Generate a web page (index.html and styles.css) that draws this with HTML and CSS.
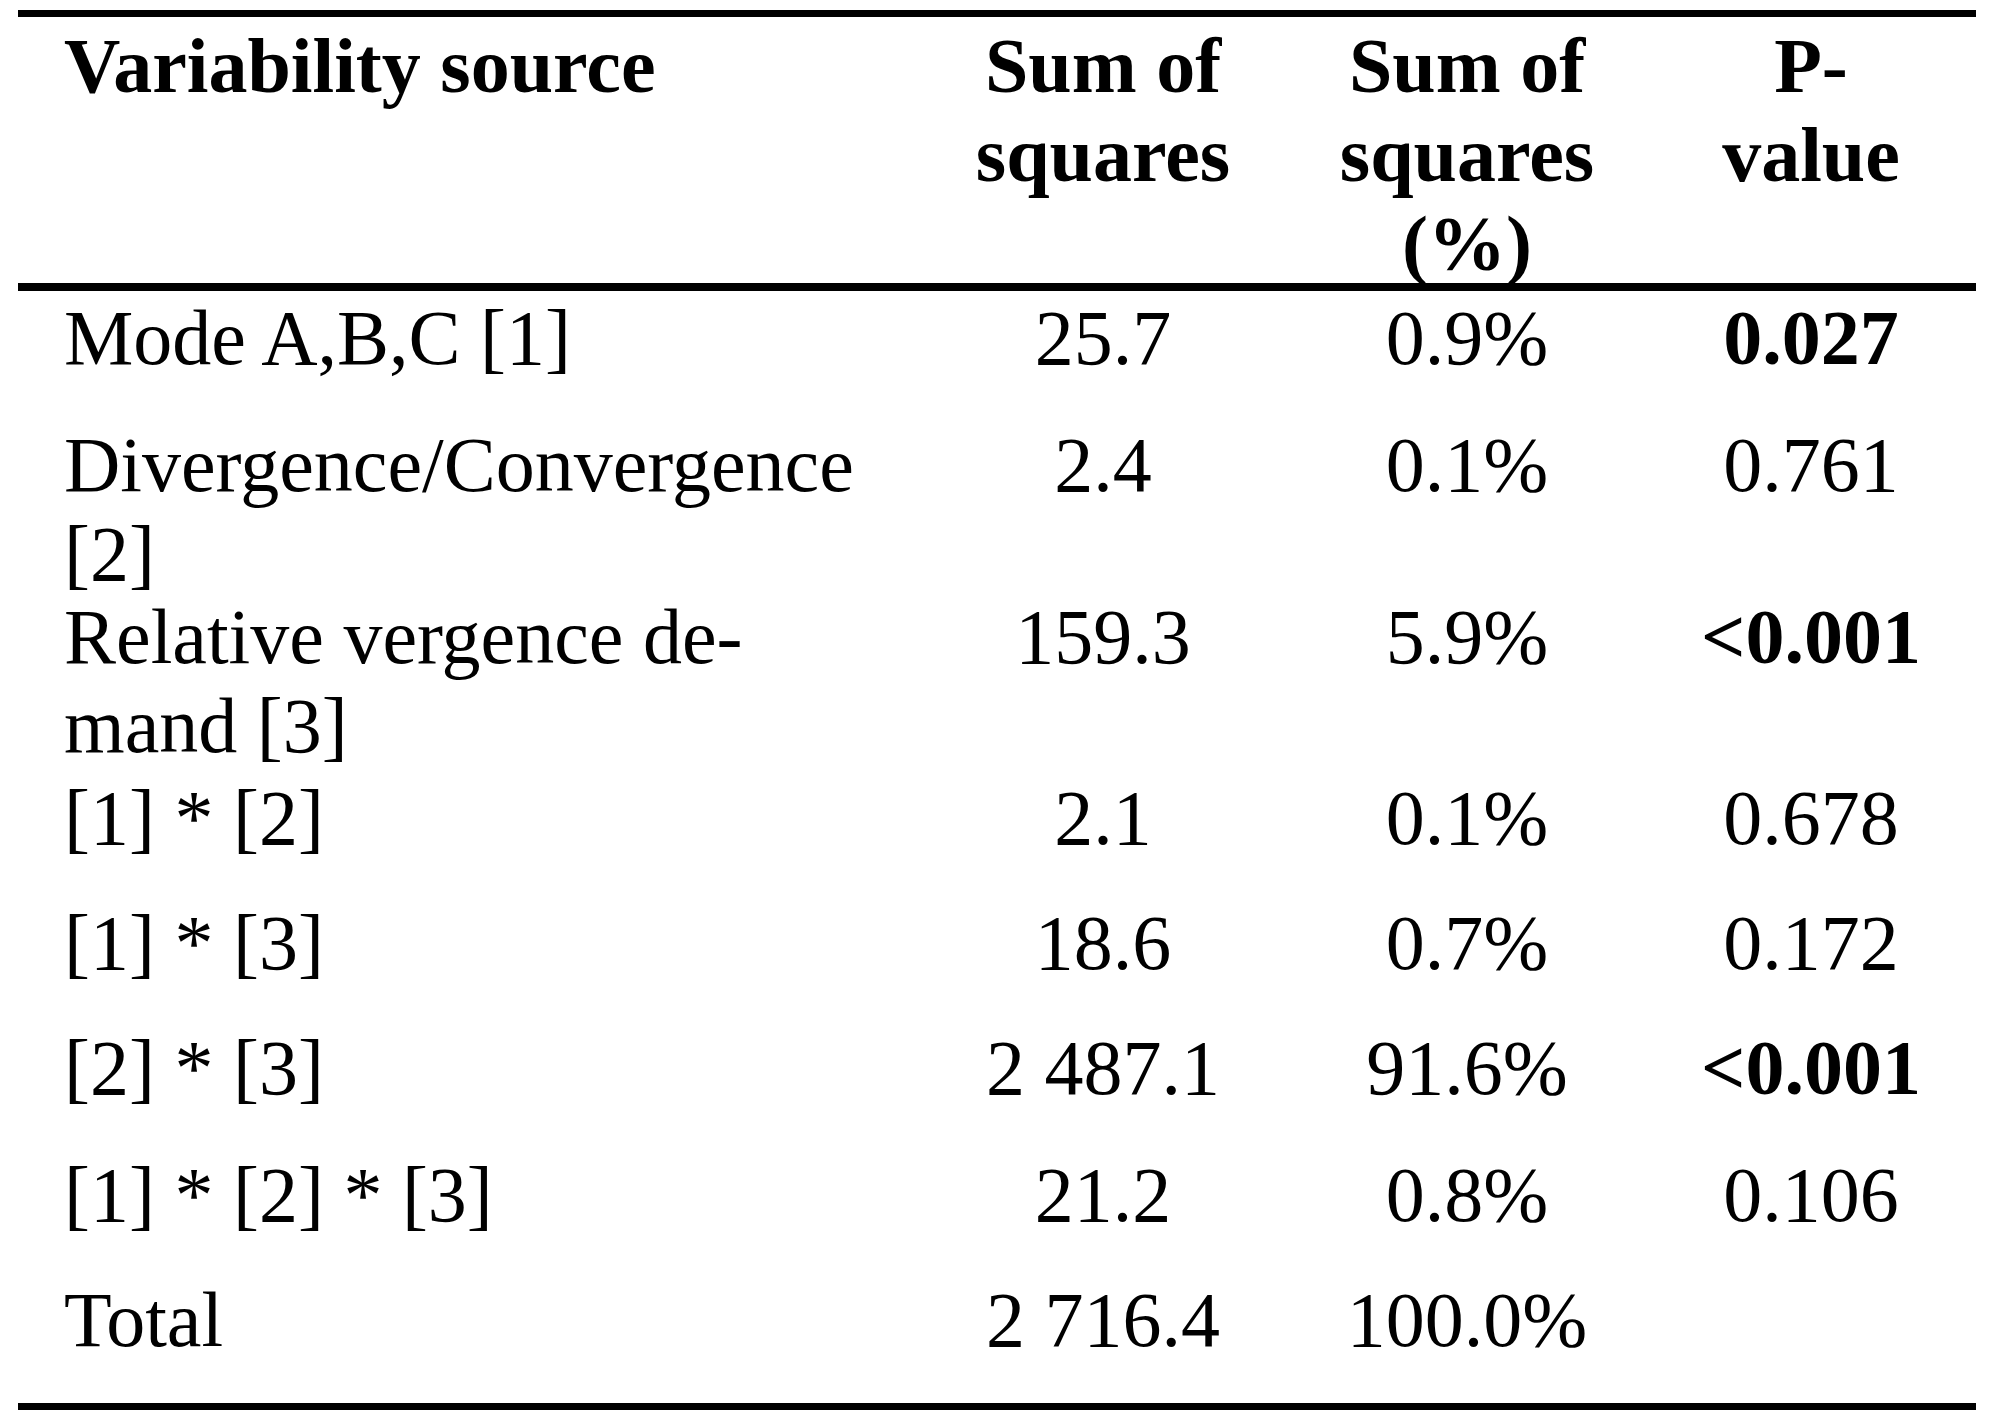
FILE: index.html
```html
<!DOCTYPE html>
<html lang="en">
<head>
<meta charset="utf-8">
<title>ANOVA table</title>
<link rel="stylesheet" href="styles.css">
</head>
<body>
<table class="anova">
  <colgroup>
    <col class="c-src">
    <col class="c-ss">
    <col class="c-pct">
    <col class="c-p">
  </colgroup>
  <thead>
    <tr>
      <th class="src"><div class="hd">Variability source</div></th>
      <th><div class="hd">Sum of<br>squares</div></th>
      <th><div class="hd">Sum of<br>squares<br>(%)</div></th>
      <th><div class="hd">P-<br>value</div></th>
    </tr>
  </thead>
  <tbody>
    <tr class="r-a">
      <td class="src">Mode A,B,C [1]</td>
      <td>25.7</td>
      <td>0.9%</td>
      <td class="sig">0.027</td>
    </tr>
    <tr class="r-b">
      <td class="src"><div class="squeeze">Divergence/Convergence<br>[2]</div></td>
      <td>2.4</td>
      <td>0.1%</td>
      <td>0.761</td>
    </tr>
    <tr class="r-c">
      <td class="src">Relative vergence de-<br>mand [3]</td>
      <td>159.3</td>
      <td>5.9%</td>
      <td class="sig">&lt;0.001</td>
    </tr>
    <tr class="r-d">
      <td class="src">[1] * [2]</td>
      <td>2.1</td>
      <td>0.1%</td>
      <td>0.678</td>
    </tr>
    <tr class="r-d">
      <td class="src">[1] * [3]</td>
      <td>18.6</td>
      <td>0.7%</td>
      <td>0.172</td>
    </tr>
    <tr class="r-a">
      <td class="src">[2] * [3]</td>
      <td>2 487.1</td>
      <td>91.6%</td>
      <td class="sig">&lt;0.001</td>
    </tr>
    <tr class="r-d">
      <td class="src">[1] * [2] * [3]</td>
      <td>21.2</td>
      <td>0.8%</td>
      <td>0.106</td>
    </tr>
    <tr class="r-last">
      <td class="src">Total</td>
      <td>2 716.4</td>
      <td>100.0%</td>
      <td></td>
    </tr>
  </tbody>
</table>
</body>
</html>
```

FILE: styles.css
```css
html, body {
  margin: 0;
  padding: 0;
  background: #ffffff;
}

body {
  color: #000000;
  font-family: "Liberation Serif", "Times New Roman", serif;
  font-size: 78px;
  line-height: 89px;
}

.anova {
  margin: 10px 0 0 18px;
  width: 1958px;
  table-layout: fixed;
  border-collapse: separate;
  border-spacing: 0;
}

.c-src { width: 900px; }
.c-ss { width: 370px; }
.c-pct { width: 358px; }
.c-p { width: 330px; }

.anova th,
.anova td {
  padding: 2px 20px 0;
  vertical-align: top;
  text-align: center;
  white-space: nowrap;
  font-weight: normal;
}

.anova th {
  font-weight: bold;
  padding-top: 4px;
  border-top: 7px solid #000;
  border-bottom: 8px solid #000;
}

.anova .src {
  text-align: left;
  padding-left: 46px;
}

.hd {
  height: 262px;
}

.squeeze {
  height: 170px;
}

.anova .sig {
  font-weight: bold;
}

.r-a { height: 127px; }
.r-b { height: 172px; }
.r-c { height: 181px; }
.r-d { height: 125px; }
.r-last { height: 137px; }

.r-last td {
  border-bottom: 7px solid #000;
}
```
